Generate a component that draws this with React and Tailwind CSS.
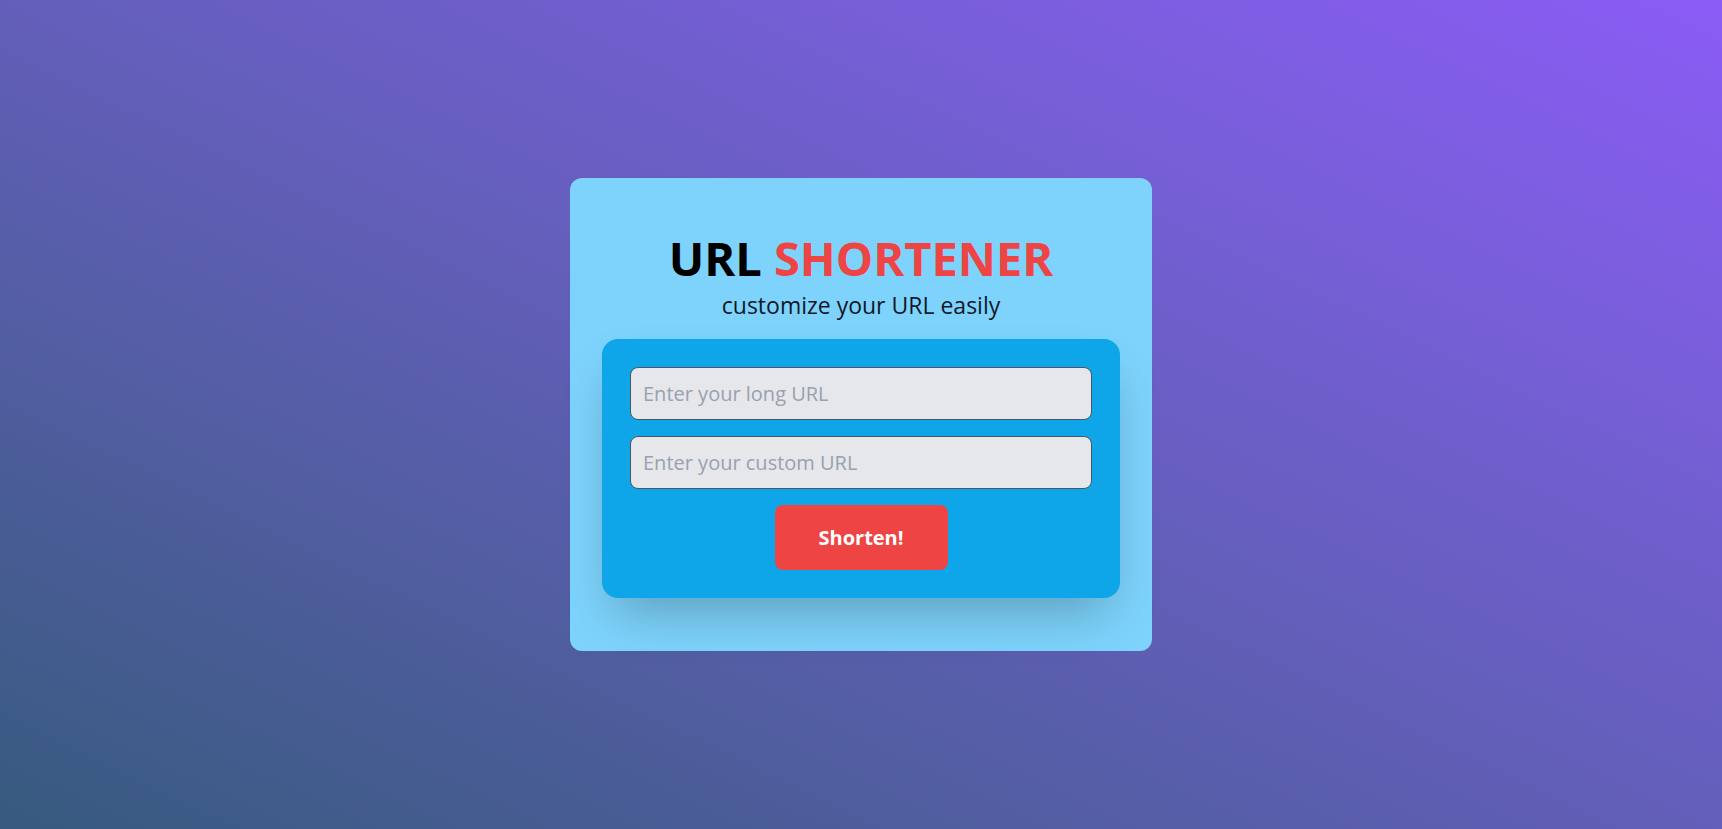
import { useState } from 'react'

// Single-card URL shortener form, centered on a diagonal gradient.
export default function App() {
  const [longUrl, setLongUrl] = useState('')
  const [customUrl, setCustomUrl] = useState('')

  return (
    <div className="flex min-h-screen items-center justify-center bg-gradient-to-tr from-[#375a7f] to-[#8b5cf6] font-['Open_Sans',sans-serif]">
      <div className="flex h-[473px] w-[582px] flex-col rounded-xl bg-[#7dd3fc] px-8 pt-[57px]">
        <h1 className="text-center text-[47px] font-bold leading-none text-black">
          URL <span className="text-[#ef4444]">SHORTENER</span>
        </h1>
        <p className="mt-[9px] text-center text-[23px] leading-7 text-gray-900">customize your URL easily</p>
        <div className="mt-5 flex flex-col gap-4 rounded-2xl bg-[#0ea5e9] p-7 shadow-2xl">
          <input
            value={longUrl}
            onChange={(e) => setLongUrl(e.target.value)}
            placeholder="Enter your long URL"
            className="h-[53px] rounded-lg border border-gray-600 bg-gray-200 px-3 text-xl outline-none placeholder:text-gray-400"
          />
          <input
            value={customUrl}
            onChange={(e) => setCustomUrl(e.target.value)}
            placeholder="Enter your custom URL"
            className="h-[53px] rounded-lg border border-gray-600 bg-gray-200 px-3 text-xl outline-none placeholder:text-gray-400"
          />
          <button className="mx-auto h-[65px] w-[173px] rounded-lg bg-[#ef4444] text-xl font-bold text-white">
            Shorten!
          </button>
        </div>
      </div>
    </div>
  )
}
